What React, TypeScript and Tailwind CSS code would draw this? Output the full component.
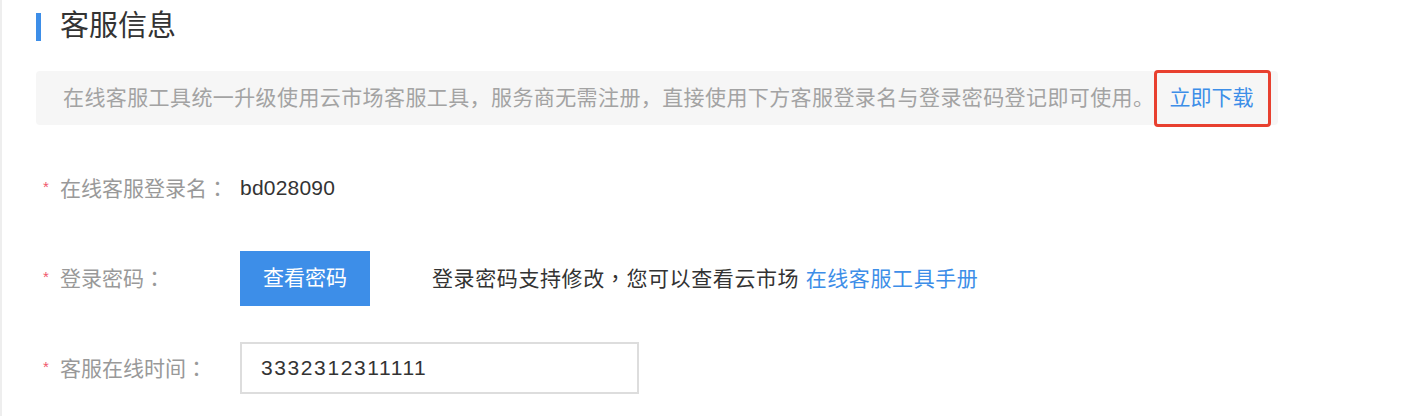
const FONT = "font-['Liberation_Sans','Noto_Sans_CJK_SC',sans-serif]";
const TC = "font-['Noto_Sans_CJK_TC',sans-serif]";

function Star() {
  return (
    <span className="w-[24px] shrink-0 pl-[7px] text-[15px] leading-none text-[#f0566a] -mt-[4px]">
      *
    </span>
  );
}

function Label({ children }: { children: React.ReactNode }) {
  return (
    <div className="flex w-[204px] shrink-0 items-center">
      <Star />
      <span className="text-[#999999]">
        {children}
        <span className={TC}>：</span>
      </span>
    </div>
  );
}

export default function App() {
  return (
    <main
      className={`${FONT} h-[416px] w-[1416px] overflow-hidden border-l-2 border-[#eeeeee] bg-white pl-[34px] text-[21px]`}
    >
      <div className="flex h-[54px] items-center">
        <span className="h-[28px] w-[5px] bg-[#3d8ee8]" />
        <h1 className="ml-[19px] text-[29px] font-normal text-[#333333]">客服信息</h1>
      </div>

      <div className="mt-[17px] flex h-[54px] w-[1242px] items-center rounded-[4px] bg-[#f6f6f6] pl-[27px] text-[#a3a3a3]">
        <span className="tracking-[0.4px]">
          在线客服工具统一升级使用云市场客服工具，服务商无需注册，直接使用下方客服登录名与登录密码登记即可使用。
        </span>
        <span className="flex h-[57px] items-center rounded-[4px] border-[3px] border-[#e8402f] pl-[12px] pr-[15px] text-[#3d8ee8]">
          立即下载
        </span>
      </div>

      <div className="mt-[18px] flex h-[90px] items-center">
        <Label>在线客服登录名</Label>
        <span className="tracking-[0.2px] text-[#333333]">bd028090</span>
      </div>

      <div className="flex h-[90px] items-center">
        <Label>登录密码</Label>
        <button className="h-[55px] w-[130px] bg-[#3d8ee8] text-white">查看密码</button>
        <span className="ml-[62px] tracking-[0.6px] text-[#333333]">
          登录密码支持修改<span className={TC}>，</span>您可以查看云市场{" "}
          <span className="text-[#3d8ee8]">在线客服工具手册</span>
        </span>
      </div>

      <div className="flex h-[90px] items-center">
        <Label>客服在线时间</Label>
        <input
          readOnly
          value="3332312311111"
          className="h-[52px] w-[399px] border-2 border-[#dddddd] px-[19px] tracking-[1.6px] text-[#333333] outline-none"
        />
      </div>
    </main>
  );
}
